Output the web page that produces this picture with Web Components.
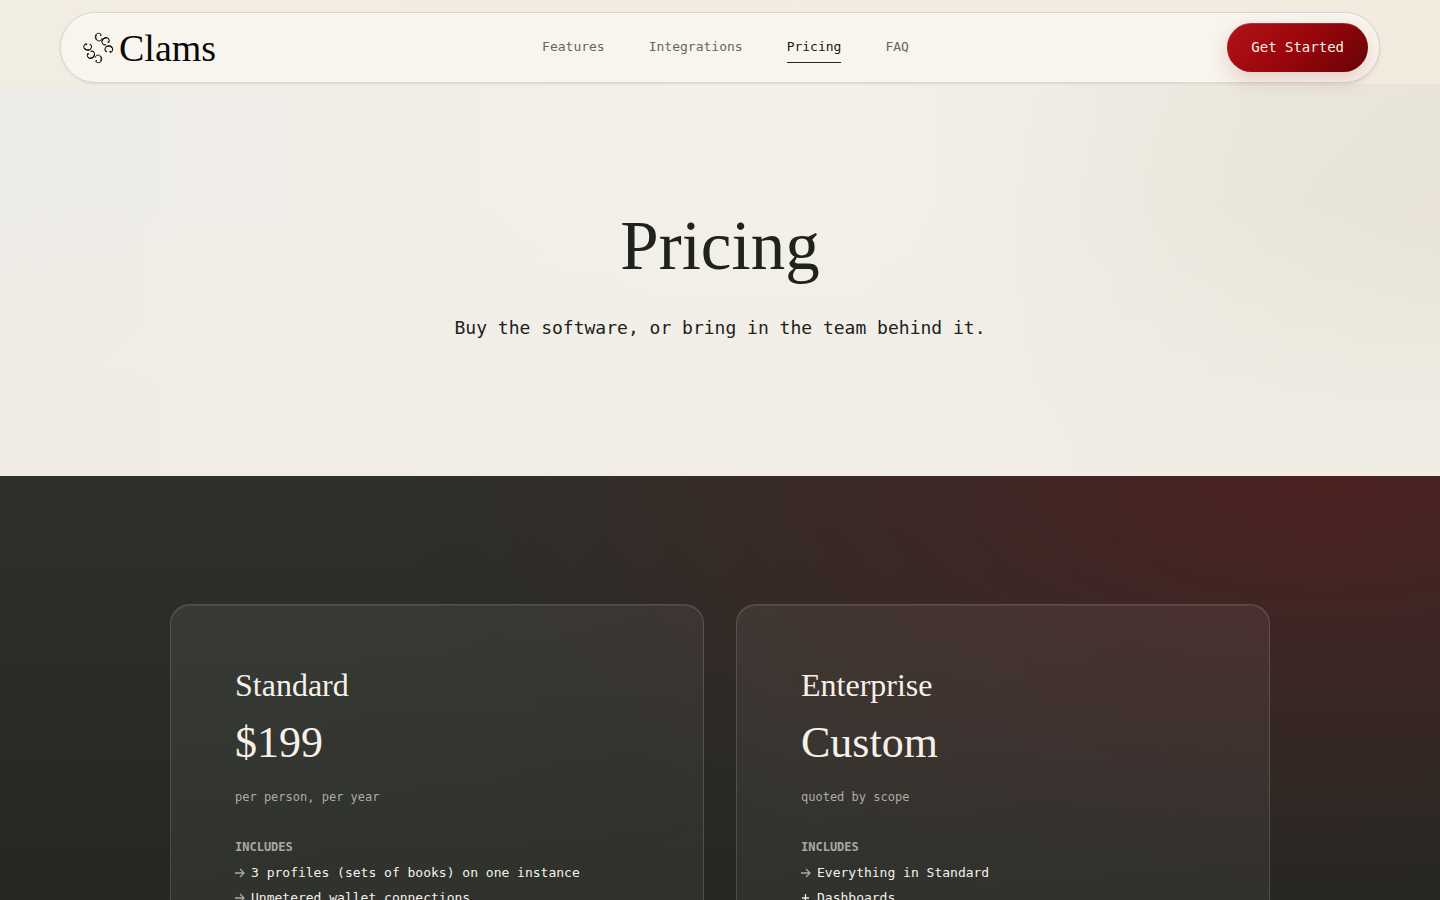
<!DOCTYPE html>
<html lang="en">
<head>
<meta charset="utf-8">
<meta name="viewport" content="width=device-width, initial-scale=1">
<title>Clams – Pricing</title>
<style>
  html { background: #232521; }
  body {
    margin: 0;
    --sans: "DejaVu Sans Mono", monospace;
    --serif: "Liberation Serif", serif;
    font-family: var(--sans);
    color: #20221e;
  }
</style>
</head>
<body>
<clams-page></clams-page>
<script>
const define = (name, html) => {
  const template = document.createElement('template');
  template.innerHTML = html;
  customElements.define(name, class extends HTMLElement {
    constructor() {
      super();
      this.attachShadow({ mode: 'open' }).append(template.content.cloneNode(true));
    }
  });
};

define('clams-logo', `
<style>
  :host { display: block; }
  a { display: flex; align-items: center; gap: 4px; color: #090a08; text-decoration: none; font: 38px/48px var(--serif); }
  svg { display: block; width: 32px; height: 32px; fill: none; stroke: currentColor; stroke-width: 1; stroke-linecap: round; }
  circle { fill: currentColor; stroke: none; }
</style>
<a href="#" aria-label="Clams home">
  <svg viewBox="0 0 32 32" aria-hidden="true">
    <defs>
      <g id="shell">
        <path d="M2.8-2.3C1.7-4.2-1.4-4.2-2.6-2.3C-3.8-.3-3.2 3.6.2 3.9C1.8 4 3 3 3.3 1.7"/>
        <path d="M-2.2-2C-3-.5-2.8 1.7-1.8 2.6"/>
        <circle cx="2.3" cy="-1.800" r=".8"/>
      </g>
    </defs>
    <use href="#shell" transform="translate(15.500 5)"/>
    <use href="#shell" transform="translate(22.500 9) rotate(60)"/>
    <use href="#shell" transform="translate(26 17) rotate(105)"/>
    <use href="#shell" transform="translate(15.500 27) rotate(180)"/>
    <use href="#shell" transform="translate(8 23) rotate(240)"/>
    <use href="#shell" transform="translate(4.500 15) rotate(285)"/>
  </svg>
  <span>Clams</span>
</a>`);

define('nav-link', `
<style>
  :host { display: block; }
  ::slotted(a) { display: block; font: 13px/30px var(--sans); color: #65665f; text-decoration: none; border-bottom: 1px solid transparent; }
  ::slotted(a[aria-current]) { color: #171815; border-bottom-color: #30211f; }
</style>
<slot></slot>`);

define('cta-button', `
<style>
  :host { display: block; }
  button { height: 49px; padding: 0 24px 2px; border: 0; border-radius: 25px; background: linear-gradient(135deg, #b31319, #98060b 50%, #650407); color: #fbeee8; font: 14px/20px var(--sans); box-shadow: 0 8px 20px #8f10142b, inset 0 1px #ffffff26; cursor: pointer; }
</style>
<button type="button"><slot></slot></button>`);

define('site-header', `
<style>
  :host { display: block; padding: 12px 60px 1px; background: linear-gradient(90deg, #f2ede1, #f4ebe1 55%, #f2ecdf); position: relative; z-index: 1; }
  header { display: grid; grid-template-columns: 1fr auto 1fr; align-items: center; box-sizing: border-box; min-height: 71px; padding: 0 11px 0 22px; border: 1px solid #d9d6ce; border-radius: 36px; background: #f8f5ee; box-shadow: 0 1px 3px #00000014, inset 0 1px #ffffffb3; }
  nav { display: flex; gap: 44px; }
  cta-button { justify-self: end; }
</style>
<header>
  <clams-logo></clams-logo>
  <nav aria-label="Main">
    <nav-link><a href="#">Features</a></nav-link>
    <nav-link><a href="#">Integrations</a></nav-link>
    <nav-link><a href="#" aria-current="page">Pricing</a></nav-link>
    <nav-link><a href="#">FAQ</a></nav-link>
  </nav>
  <cta-button>Get Started</cta-button>
</header>`);

define('page-hero', `
<style>
  :host { display: block; box-sizing: border-box; min-height: 392px; padding: 122px 24px 128px; text-align: center; background:
    linear-gradient(180deg, #f1ede500 30%, #f1ede5),
    radial-gradient(ellipse 460px 420px at 100% 40%, #e8e3d6, #e8e3d600),
    linear-gradient(90deg, #eeece7, #f3f0e9 45%, #f3f0e9 60%, #ece8e0); }
  ::slotted(h1) { margin: 0; font: 400 69px/80px var(--serif); color: #20221e; }
  ::slotted(p) { margin: 26px 0 0; font: 18px/32px var(--sans); color: #20221e; }
</style>
<slot></slot>`);

define('plan-card', `
<style>
  :host { display: block; box-sizing: border-box; min-height: 640px; padding: 60px 64px; border: 1px solid #ffffff24; border-radius: 20px; background: linear-gradient(160deg, #ffffff10, #ffffff09); box-shadow: inset 0 1px #ffffff14; color: #f5f1e9; }
  ::slotted(h2) { margin: 0; font: 400 32px/40px var(--serif); }
  ::slotted(.price) { margin: 12px 0 0; font: 44px/52px var(--serif); }
  ::slotted(.unit) { margin: 16px 0 0; font: 12px/24px var(--sans); color: #adaca5; }
  h3 { margin: 28px 0 4px; font: 700 12px/20px var(--sans); color: #a9a9a2; }
  ul { display: grid; gap: 1px; margin: 0; padding: 0; list-style: none; }
</style>
<slot></slot>
<h3>INCLUDES</h3>
<ul><slot name="feature"></slot></ul>`);

define('plan-feature', `
<style>
  :host { display: flex; align-items: center; gap: 6px; font: 13px/24px var(--sans); color: #f5f1e9; }
  svg { flex: none; width: 10px; height: 10px; fill: none; stroke: #aaa9a1; stroke-width: 1.3; }
  .plus, :host([added]) .arrow { display: none; }
  :host([added]) .plus { display: block; stroke: #eeeae2; }
</style>
<svg class="arrow" viewBox="0 0 10 10" aria-hidden="true"><path d="M0 5H9M5 1L9 5L5 9"/></svg>
<svg class="plus" viewBox="0 0 10 10" aria-hidden="true"><path d="M1 5H8M4.500 1V9"/></svg>
<slot></slot>`);

define('plan-section', `
<style>
  :host { display: block; padding: 128px 24px; background:
    radial-gradient(ellipse 940px 440px at 92% 0, #4c2120, #48222199 40%, #48222100 100%),
    linear-gradient(180deg, #2d302b, #252722 420px); }
  .grid { display: grid; grid-template-columns: 1fr 1fr; gap: 32px; max-width: 1100px; margin: auto; }
</style>
<div class="grid"><slot></slot></div>`);

define('clams-page', `
<style>
  :host { display: block; }
</style>
<site-header></site-header>
<main>
  <page-hero>
    <h1>Pricing</h1>
    <p>Buy the software, or bring in the team behind it.</p>
  </page-hero>
  <plan-section>
    <plan-card>
      <h2>Standard</h2>
      <p class="price">$199</p>
      <p class="unit">per person, per year</p>
      <plan-feature slot="feature" role="listitem">3 profiles (sets of books) on one instance</plan-feature>
      <plan-feature slot="feature" role="listitem">Unmetered wallet connections</plan-feature>
    </plan-card>
    <plan-card>
      <h2>Enterprise</h2>
      <p class="price">Custom</p>
      <p class="unit">quoted by scope</p>
      <plan-feature slot="feature" role="listitem">Everything in Standard</plan-feature>
      <plan-feature slot="feature" role="listitem" added>Dashboards</plan-feature>
    </plan-card>
  </plan-section>
</main>`);
</script>
</body>
</html>
